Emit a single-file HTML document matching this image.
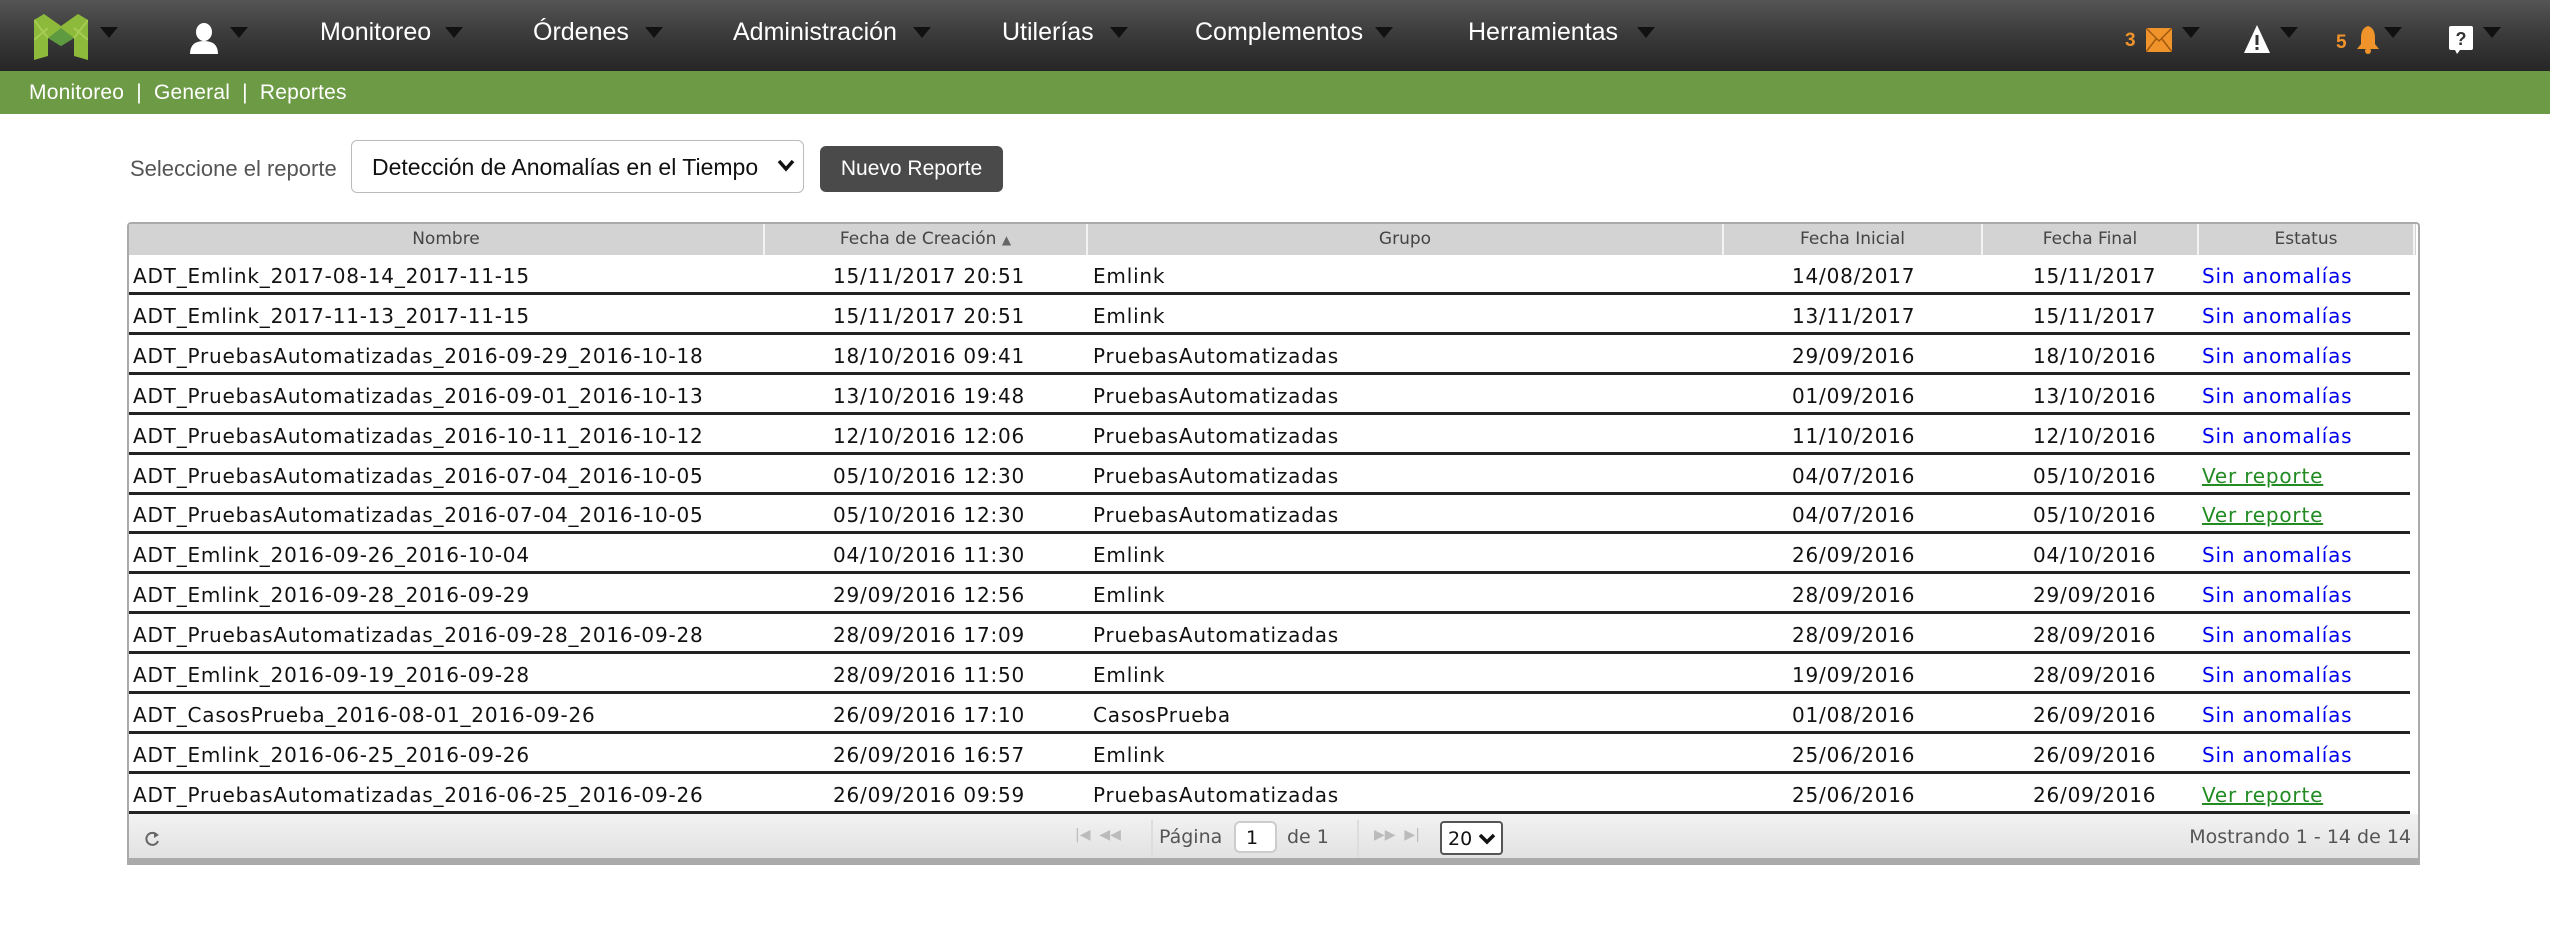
<!DOCTYPE html>
<html><head><meta charset="utf-8"><style>
*{margin:0;padding:0;box-sizing:border-box}
body{width:2550px;height:934px;background:#fff;font-family:"Liberation Sans",sans-serif;position:relative;overflow:hidden}
.nav{position:absolute;left:0;top:0;width:2550px;height:71px;background:linear-gradient(#555,#3a3a3a 50%,#262626)}
.nav .it{position:absolute;top:18px;color:#fff;font-size:25px}
.tri{position:absolute;top:27px;width:0;height:0;border-left:9px solid transparent;border-right:9px solid transparent;border-top:11px solid #111}
.green{position:absolute;left:0;top:71px;width:2550px;height:43px;background:#6d9a45;color:#fff;font-size:21px;padding:10px 0 0 29px;letter-spacing:.2px}
.lbl{position:absolute;left:130px;top:156px;font-size:22px;color:#555}
.sel{position:absolute;left:351px;top:140px;width:453px;height:53px;border:1px solid #bbb;border-radius:6px;font-size:23px;padding:13px 0 0 20px;color:#111}
.btn{position:absolute;left:820px;top:146px;width:183px;height:46px;background:#4a4a4a;border-radius:6px;color:#fff;font-size:21px;text-align:center;line-height:46px}
.tbl{position:absolute;left:127px;top:222px;width:2293px;height:643px;border:2px solid #aaa;border-radius:4px 4px 0 0;background:#fff;overflow:hidden}
.hd{position:absolute;left:0;top:0;width:2287px;height:31px;background:#d3d3d3;font-family:"DejaVu Sans",sans-serif;font-size:17px;color:#444}
.hd div{position:absolute;top:0;height:31px;line-height:31px;text-align:center;border-right:2px solid #f3f3f3}
.row{position:absolute;left:0;width:2281px;height:40px;border-bottom:3px solid #222;font-family:"DejaVu Sans",sans-serif;font-size:20px;letter-spacing:0.8px;color:#111}
.row span{position:absolute;top:9px;white-space:nowrap}
.b{color:#0000ee}.g{color:#228b22;text-decoration:underline}
.ft{position:absolute;left:0;top:590px;width:2290px;height:50px;background:linear-gradient(#f2f2f2,#e2e2e2);border-bottom:6px solid #aaa;font-family:"DejaVu Sans",sans-serif;font-size:19px;color:#555}
</style></head><body>
<div class="nav">
<svg style="position:absolute;left:34px;top:14px" width="54" height="46" viewBox="0 0 54 46"><path d="M0 6 L10 0 L27 12 L44 0 L54 6 L54 46 L40 42 L40 24 L27 32 L14 24 L14 42 L0 46Z" fill="#8dba3a"/><path d="M14 24 L27 14 L40 24 L27 32Z" fill="#5e9a3f"/><path d="M0 6 L14 24 M54 6 L40 24 M0 26 L14 14 M54 26 L40 14" stroke="#a6cc55" stroke-width="2"/></svg>
<div class="tri" style="left:100px"></div>
<svg style="position:absolute;left:189px;top:22px" width="30" height="32" viewBox="0 0 30 32"><ellipse cx="15" cy="10" rx="8" ry="9" fill="#fff"/><path d="M1 32 Q1 19 15 19 Q29 19 29 32Z" fill="#fff"/></svg>
<div class="tri" style="left:230px"></div>
<div class="it" style="left:320px">Monitoreo</div><div class="tri" style="left:445px"></div>
<div class="it" style="left:533px">Órdenes</div><div class="tri" style="left:645px"></div>
<div class="it" style="left:733px">Administración</div><div class="tri" style="left:913px"></div>
<div class="it" style="left:1002px">Utilerías</div><div class="tri" style="left:1110px"></div>
<div class="it" style="left:1195px">Complementos</div><div class="tri" style="left:1375px"></div>
<div class="it" style="left:1468px">Herramientas</div><div class="tri" style="left:1637px"></div>
<div style="position:absolute;left:2125px;top:30px;color:#f0932b;font-weight:bold;font-size:19px">3</div>
<svg style="position:absolute;left:2146px;top:28px" width="26" height="24"><rect width="26" height="24" fill="#f0932b"/><path d="M0 0 L13 13 L26 0 M0 24 L10 11 M26 24 L16 11" stroke="#a05a10" stroke-width="1.5" fill="none"/></svg>
<div class="tri" style="left:2182px"></div>
<svg style="position:absolute;left:2244px;top:25px" width="26" height="28"><path d="M13 0 L26 28 L0 28Z" fill="#fff"/><rect x="11.5" y="10" width="3" height="10" fill="#333"/><rect x="11.5" y="22" width="3" height="3" fill="#333"/></svg>
<div class="tri" style="left:2280px"></div>
<div style="position:absolute;left:2336px;top:32px;color:#f0932b;font-weight:bold;font-size:19px">5</div>
<svg style="position:absolute;left:2356px;top:26px" width="24" height="28"><path d="M12 0 Q5 2 5 12 L5 18 L1 23 L23 23 L19 18 L19 12 Q19 2 12 0Z" fill="#f0932b"/><circle cx="12" cy="25" r="3" fill="#f0932b"/></svg>
<div class="tri" style="left:2384px"></div>
<svg style="position:absolute;left:2449px;top:26px" width="24" height="28"><rect width="24" height="24" rx="2" fill="#fff"/><path d="M6 24 L8 28 L11 24Z" fill="#fff"/><text x="12" y="19" font-family="Liberation Sans" font-weight="bold" font-size="18" text-anchor="middle" fill="#333">?</text></svg>
<div class="tri" style="left:2483px"></div>
</div>
<div class="green">Monitoreo &nbsp;|&nbsp; General &nbsp;|&nbsp; Reportes</div>
<div class="lbl">Seleccione el reporte</div>
<div class="sel">Detección de Anomalías en el Tiempo<svg style="position:absolute;right:8px;top:18px" width="18" height="14"><path d="M2 2 L9 10 L16 2" stroke="#111" stroke-width="3.5" fill="none"/></svg></div>
<div class="btn">Nuevo Reporte</div>
<div class="tbl">
<div class="hd">
<div style="left:0;width:636px">Nombre</div>
<div style="left:636px;width:323px">Fecha de Creación <span style="font-size:12px;color:#666">▲</span></div>
<div style="left:959px;width:636px">Grupo</div>
<div style="left:1595px;width:259px">Fecha Inicial</div>
<div style="left:1854px;width:216px">Fecha Final</div>
<div style="left:2070px;width:216px">Estatus</div>
</div>
<div id="rows"></div>
<div class="ft">
<svg style="position:absolute;left:14px;top:15px" width="18" height="20"><path d="M14 6 A6 6 0 1 0 15 12" stroke="#666" stroke-width="2" fill="none"/><path d="M11 3 L16 6 L11 9Z" fill="#666"/></svg>
<div style="position:absolute;left:946px;top:13px;color:#bbb;font-size:14px">|◀ &nbsp;◀◀</div>
<div style="position:absolute;left:1022px;top:6px;width:2px;height:38px;background:#ddd"></div>
<div style="position:absolute;left:1030px;top:12px">Página</div>
<div style="position:absolute;left:1105px;top:7px;width:43px;height:32px;background:#fff;border:2px solid #ccc;border-radius:6px;color:#111;padding:4px 0 0 10px">1</div>
<div style="position:absolute;left:1158px;top:12px">de 1</div>
<div style="position:absolute;left:1228px;top:6px;width:2px;height:38px;background:#ddd"></div>
<div style="position:absolute;left:1245px;top:13px;color:#bbb;font-size:14px">▶▶ &nbsp;▶|</div>
<div style="position:absolute;left:1311px;top:7px;width:63px;height:34px;background:#fff;border:2px solid #555;border-radius:4px;color:#111;padding:5px 0 0 6px">20<svg style="position:absolute;left:36px;top:10px" width="18" height="12"><path d="M2 2 L9 9 L16 2" stroke="#111" stroke-width="3.5" fill="none"/></svg></div>
<div style="position:absolute;right:8px;top:12px">Mostrando 1 - 14 de 14</div>
</div>
</div>
<script>
var d=[["ADT_Emlink_2017-08-14_2017-11-15","15/11/2017 20:51","Emlink","14/08/2017","15/11/2017",0],
["ADT_Emlink_2017-11-13_2017-11-15","15/11/2017 20:51","Emlink","13/11/2017","15/11/2017",0],
["ADT_PruebasAutomatizadas_2016-09-29_2016-10-18","18/10/2016 09:41","PruebasAutomatizadas","29/09/2016","18/10/2016",0],
["ADT_PruebasAutomatizadas_2016-09-01_2016-10-13","13/10/2016 19:48","PruebasAutomatizadas","01/09/2016","13/10/2016",0],
["ADT_PruebasAutomatizadas_2016-10-11_2016-10-12","12/10/2016 12:06","PruebasAutomatizadas","11/10/2016","12/10/2016",0],
["ADT_PruebasAutomatizadas_2016-07-04_2016-10-05","05/10/2016 12:30","PruebasAutomatizadas","04/07/2016","05/10/2016",1],
["ADT_PruebasAutomatizadas_2016-07-04_2016-10-05","05/10/2016 12:30","PruebasAutomatizadas","04/07/2016","05/10/2016",1],
["ADT_Emlink_2016-09-26_2016-10-04","04/10/2016 11:30","Emlink","26/09/2016","04/10/2016",0],
["ADT_Emlink_2016-09-28_2016-09-29","29/09/2016 12:56","Emlink","28/09/2016","29/09/2016",0],
["ADT_PruebasAutomatizadas_2016-09-28_2016-09-28","28/09/2016 17:09","PruebasAutomatizadas","28/09/2016","28/09/2016",0],
["ADT_Emlink_2016-09-19_2016-09-28","28/09/2016 11:50","Emlink","19/09/2016","28/09/2016",0],
["ADT_CasosPrueba_2016-08-01_2016-09-26","26/09/2016 17:10","CasosPrueba","01/08/2016","26/09/2016",0],
["ADT_Emlink_2016-06-25_2016-09-26","26/09/2016 16:57","Emlink","25/06/2016","26/09/2016",0],
["ADT_PruebasAutomatizadas_2016-06-25_2016-09-26","26/09/2016 09:59","PruebasAutomatizadas","25/06/2016","26/09/2016",1]];
var h="";d.forEach(function(r,i){h+='<div class="row" style="top:'+(31+i*39.9)+'px"><span style="left:4px">'+r[0]+'</span><span style="left:704px">'+r[1]+'</span><span style="left:964px">'+r[2]+'</span><span style="left:1663px">'+r[3]+'</span><span style="left:1904px">'+r[4]+'</span><span style="left:2073px" class="'+(r[5]?'g':'b')+'">'+(r[5]?'Ver reporte':'Sin anomalías')+'</span></div>'});
document.getElementById("rows").innerHTML=h;
</script>
</body></html>
